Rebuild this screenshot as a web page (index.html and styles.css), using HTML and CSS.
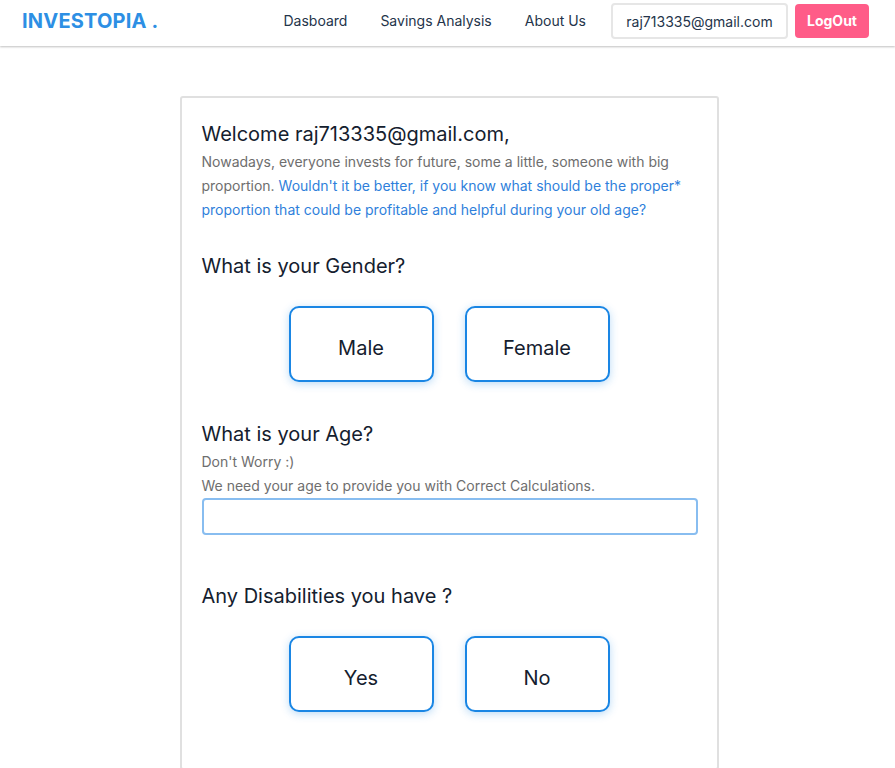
FILE: index.html
```html
<!DOCTYPE html>
<html>
<head>
<meta charset="utf-8">
<link rel="stylesheet" href="styles.css">
</head>
<body>
<header class="nav">
  <div class="logo">INVESTOPIA .</div>
  <nav class="links">
    <a>Dasboard</a>
    <a>Savings Analysis</a>
    <a>About Us</a>
  </nav>
  <div class="user">raj713335@gmail.com</div>
  <button class="logout">LogOut</button>
</header>
<main class="page">
  <section class="card">
    <h1 class="welcome">Welcome raj713335@gmail.com,</h1>
    <p class="intro">Nowadays, everyone invests for future, some a little, someone with big proportion. <span class="blue">Wouldn't it be better, if you know what should be the proper* proportion that could be profitable and helpful during your old age?</span></p>

    <h2 class="q q-gender">What is your Gender?</h2>
    <div class="choices">
      <button class="choice">Male</button>
      <button class="choice">Female</button>
    </div>

    <h2 class="q q-age">What is your Age?</h2>
    <p class="note note-first">Don't Worry :)</p>
    <p class="note">We need your age to provide you with Correct Calculations.</p>
    <input class="age" type="text">

    <h2 class="q q-dis">Any Disabilities you have ?</h2>
    <div class="choices">
      <button class="choice">Yes</button>
      <button class="choice">No</button>
    </div>
  </section>
</main>
</body>
</html>
```
FILE: styles.css
```css
* { box-sizing: border-box; }
body {
  margin: 0;
  font-family: Inter, "Noto Sans", sans-serif;
  color: #1b2a3a;
  background: #fff;
}
.nav {
  height: 46px;
  display: flex;
  align-items: center;
  padding: 0 26px 0 22px;
  background: #fff;
  box-shadow: 0 1px 2px rgba(0,0,0,0.25);
  position: relative;
}
.logo {
  font-size: 20px;
  font-weight: 700;
  color: #2d8fe4;
  letter-spacing: 0.2px;
  margin-top: -5px;
}
.links {
  display: flex;
  gap: 33px;
  margin-left: auto;
  margin-top: -5px;
}
.links a {
  font-size: 14px;
  color: #24344a;
}
.user {
  margin-left: 25px;
  height: 36px;
  width: 177px;
  border: 2px solid #e6e6e6;
  border-radius: 4px;
  display: flex;
  align-items: center;
  justify-content: center;
  font-size: 14px;
  color: #24344a;
  margin-top: -4px;
}
.logout {
  margin-left: 7px;
  height: 34px;
  width: 74px;
  border: none;
  border-radius: 4px;
  background: #ff5c88;
  color: #fff;
  font-family: Inter, sans-serif;
  font-weight: 700;
  font-size: 14px;
  margin-top: -5px;
}
.page {
  display: flex;
  justify-content: center;
  padding-top: 50px;
  padding-left: 3px;
}
.card {
  width: 539px;
  border: 2px solid #e0e0e0;
  border-radius: 3px;
  padding: 22px 20px 56px 20px;
}
.welcome {
  margin: 0;
  font-size: 20px;
  font-weight: 400;
  line-height: 28px;
  color: #14202e;
}
.intro {
  margin: 2px 0 0 0;
  font-size: 14px;
  line-height: 24px;
  color: #6e6e6e;
}
.blue { color: #2f7fdb; }
.q {
  margin: 0;
  font-size: 20px;
  font-weight: 400;
  line-height: 28px;
  color: #14202e;
}
.q-gender { margin-top: 30px; }
.q-age { margin-top: 38px; }
.q-dis { margin-top: 47px; }
.choices {
  display: flex;
  justify-content: center;
  gap: 31px;
  margin-top: 26px;
}
.choice {
  width: 145px;
  height: 76px;
  border: 2px solid #1a86e4;
  border-radius: 10px;
  background: #fff;
  box-shadow: 0 2px 8px rgba(30,136,229,0.3);
  font-family: Inter, sans-serif;
  font-size: 20px;
  color: #14202e;
  padding-top: 8px;
}
.note {
  margin: 0;
  font-size: 14px;
  line-height: 24px;
  color: #6e6e6e;
}
.note-first { margin-top: 2px; }
.age {
  display: block;
  width: 496px;
  height: 37px;
  border: 2px solid #88bdf0;
  border-radius: 4px;
  margin-top: 0;
}
```
